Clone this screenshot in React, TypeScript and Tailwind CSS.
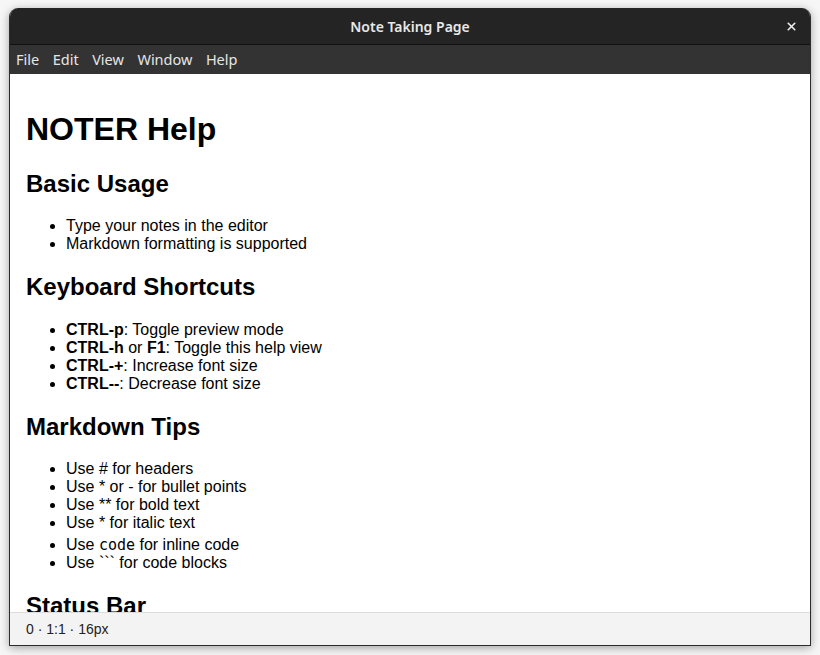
import { X } from 'lucide-react'

const menus = ['File', 'Edit', 'View', 'Window', 'Help']

function H2({ children }: { children: React.ReactNode }) {
  return <h2 className="text-[24px] font-bold leading-[1.15] my-[0.83em]">{children}</h2>
}

function List({ children }: { children: React.ReactNode }) {
  return <ul className="list-disc pl-10 mt-[20px] mb-4 text-[16px] leading-[18px]">{children}</ul>
}

export default function App() {
  return (
    <div className="w-[820px] h-[655px] bg-[#f6f6f6] pt-2 px-[9px] pb-[9px]">
      <div className="h-full flex flex-col rounded-t-[9px] overflow-hidden border border-t-0 border-[#2c2c2c] shadow-[0_2px_10px_rgba(0,0,0,0.35)] bg-white">
        {/* Title bar */}
        <div className="relative h-[37px] shrink-0 bg-[#242424] border-b border-[#111] flex items-center justify-center font-['Noto_Sans',sans-serif] text-[14px] font-semibold text-[#e8e8e8]">
          Note Taking Page
          <button className="absolute right-[12px] top-[12px] text-[#eee]">
            <X className="w-[13px] h-[13px]" strokeWidth={3} />
          </button>
        </div>

        {/* Menu bar */}
        <div className="h-[29px] shrink-0 bg-[#333333] flex items-center gap-[13.5px] px-[6px] font-['Noto_Sans',sans-serif] text-[14.5px] text-[#e6e6e6]">
          {menus.map(m => (
            <span key={m}>{m}</span>
          ))}
        </div>

        {/* Content */}
        <div className="flex-1 overflow-hidden px-4 py-4 font-['Liberation_Sans',Arial,sans-serif] text-black">
          <h1 className="text-[32px] font-bold leading-[1.15] my-[0.67em]">NOTER Help</h1>

          <H2>Basic Usage</H2>
          <List>
            <li>Type your notes in the editor</li>
            <li>Markdown formatting is supported</li>
          </List>

          <H2>Keyboard Shortcuts</H2>
          <List>
            <li><strong>CTRL-p</strong>: Toggle preview mode</li>
            <li><strong>CTRL-h</strong> or <strong>F1</strong>: Toggle this help view</li>
            <li><strong>CTRL-+</strong>: Increase font size</li>
            <li><strong>CTRL--</strong>: Decrease font size</li>
          </List>

          <H2>Markdown Tips</H2>
          <List>
            <li>Use # for headers</li>
            <li>Use * or - for bullet points</li>
            <li>Use ** for bold text</li>
            <li>Use * for italic text</li>
            <li className="mt-[4px]">
              Use <code className="font-['DejaVu_Sans_Mono',monospace] text-[15px] leading-[18px]">code</code> for inline code
            </li>
            <li>Use ``` for code blocks</li>
          </List>

          <H2>Status Bar</H2>
        </div>

        {/* Status bar */}
        <div className="h-[33px] shrink-0 bg-[#f3f3f3] border-t border-[#dcdcdc] flex items-center px-4 font-['Liberation_Sans',Arial,sans-serif] text-[14px] text-[#222]">
          0 · 1:1 · 16px
        </div>
      </div>
    </div>
  )
}
